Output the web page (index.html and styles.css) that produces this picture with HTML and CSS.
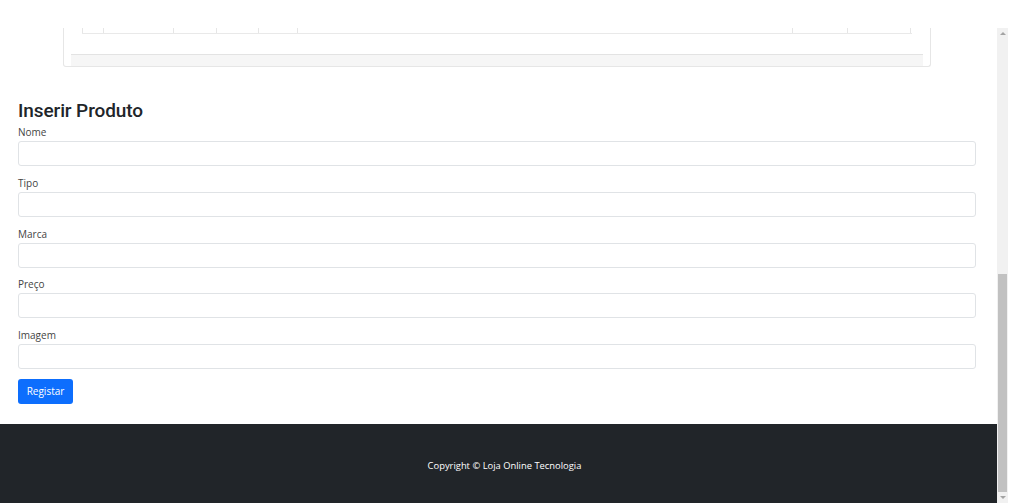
FILE: index.html
```html
<!DOCTYPE html>
<html lang="pt">
<head>
<meta charset="utf-8">
<title>Inserir Produto</title>
<link rel="stylesheet" href="styles.css">
</head>
<body>
<div class="topbar"></div>
<div class="window">
  <div class="viewport">
    <div class="card">
      <div class="table-frag">
        <div class="trow">
          <span class="cell c1"></span>
          <span class="cell c2"></span>
          <span class="cell c3"></span>
          <span class="cell c4"></span>
          <span class="cell c5"></span>
          <span class="cell c6"></span>
          <span class="cell c7"></span>
          <span class="cell c8"></span>
        </div>
      </div>
      <div class="card-footer"></div>
    </div>

    <form class="form">
      <h4 class="title">Inserir Produto</h4>
      <div class="group">
        <label class="label" for="nome">Nome</label>
        <input class="input" id="nome" type="text">
      </div>
      <div class="group">
        <label class="label" for="tipo">Tipo</label>
        <input class="input" id="tipo" type="text">
      </div>
      <div class="group">
        <label class="label" for="marca">Marca</label>
        <input class="input" id="marca" type="text">
      </div>
      <div class="group">
        <label class="label" for="preco">Preço</label>
        <input class="input" id="preco" type="text">
      </div>
      <div class="group">
        <label class="label" for="imagem">Imagem</label>
        <input class="input" id="imagem" type="text">
      </div>
      <button class="btn" type="button">Registar</button>
    </form>

    <footer class="footer">
      <p class="copy">Copyright © Loja Online Tecnologia</p>
    </footer>
  </div>
  <div class="scrollbar">
    <div class="arrow up"></div>
    <div class="track"><div class="thumb"></div></div>
    <div class="arrow down"></div>
  </div>
</div>
</body>
</html>
```
FILE: styles.css
```css
* { box-sizing: border-box; }
html, body { margin: 0; padding: 0; }
body {
  width: 1012px;
  height: 503px;
  overflow: hidden;
  background: #fff;
  font-family: "Open Sans", "Noto Sans", sans-serif;
  color: #212529;
  display: flex;
  flex-direction: column;
}
.topbar { height: 28px; flex: none; background: #fff; }
.window { flex: 1; display: flex; min-height: 0; }
.viewport {
  flex: 1;
  display: flex;
  flex-direction: column;
  overflow: hidden;
}

/* card fragment */
.card {
  margin: 0 66px 0 63px;
  border: 1px solid #e6e6e6;
  border-top: none;
  border-radius: 0 0 3px 3px;
  padding: 0 7px;
  flex: none;
}
.table-frag { height: 26px; padding: 0 11px 0 11px; }
.trow {
  height: 6px;
  display: flex;
  border-bottom: 1px solid #e9e9e9;
}
.cell { border-left: 1px solid #e6e6e6; flex: none; }
.c1 { width: 21px; }
.c2 { width: 70px; }
.c3 { width: 43px; }
.c4 { width: 42px; }
.c5 { width: 39px; }
.c6 { width: 495px; }
.c7 { width: 55px; }
.c8 { width: 64px; border-right: 1px solid #e6e6e6; }
.card-footer {
  height: 12px;
  background: #f6f6f6;
  border-top: 1px solid #e3e3e3;
}

/* form */
.form {
  padding: 0 21px 0 18px;
  margin-top: 31px;
  flex: none;
}
.title {
  margin: 0 0 1px;
  font-family: Roboto, "Open Sans", sans-serif;
  font-size: 19px;
  font-weight: 500;
  line-height: 26px;
  letter-spacing: -0.1px;
}
.group { margin-bottom: 9.8px; }
.label {
  display: block;
  font-size: 10px;
  line-height: 14px;
  color: #444;
  margin-bottom: 2px;
}
.input {
  display: block;
  width: 100%;
  height: 25px;
  border: 1px solid #e0e3e6;
  border-radius: 3px;
  background: #fff;
  padding: 0 8px;
  font: inherit;
}
.btn {
  display: block;
  margin-top: 1px;
  width: 55px;
  height: 25px;
  border: none;
  border-radius: 3px;
  background: #0d6efd;
  color: #fff;
  font-family: inherit;
  font-size: 10px;
  padding: 0;
}

/* footer */
.footer {
  margin-top: 20.5px;
  height: 80px;
  flex: none;
  background: #212529;
  display: flex;
  align-items: center;
  justify-content: center;
}
.copy {
  margin: 0;
  color: #fff;
  font-size: 9.4px;
  padding-left: 12px;
  padding-top: 3px;
}

/* scrollbar */
.scrollbar {
  width: 11px;
  margin-right: 4px;
  background: #f1f1f1;
  display: flex;
  flex-direction: column;
  flex: none;
}
.arrow { height: 11px; flex: none; }
.arrow::after {
  content: "";
  display: block;
  width: 0;
  height: 0;
  margin: 4px auto 0;
  border-left: 3px solid transparent;
  border-right: 3px solid transparent;
}
.up::after { border-bottom: 3px solid #a3a3a3; }
.down::after { border-top: 3px solid #a3a3a3; }
.track { flex: 1; display: flex; flex-direction: column; justify-content: flex-end; padding: 0 1px; }
.thumb { height: 218px; background: #c1c1c1; }
```
